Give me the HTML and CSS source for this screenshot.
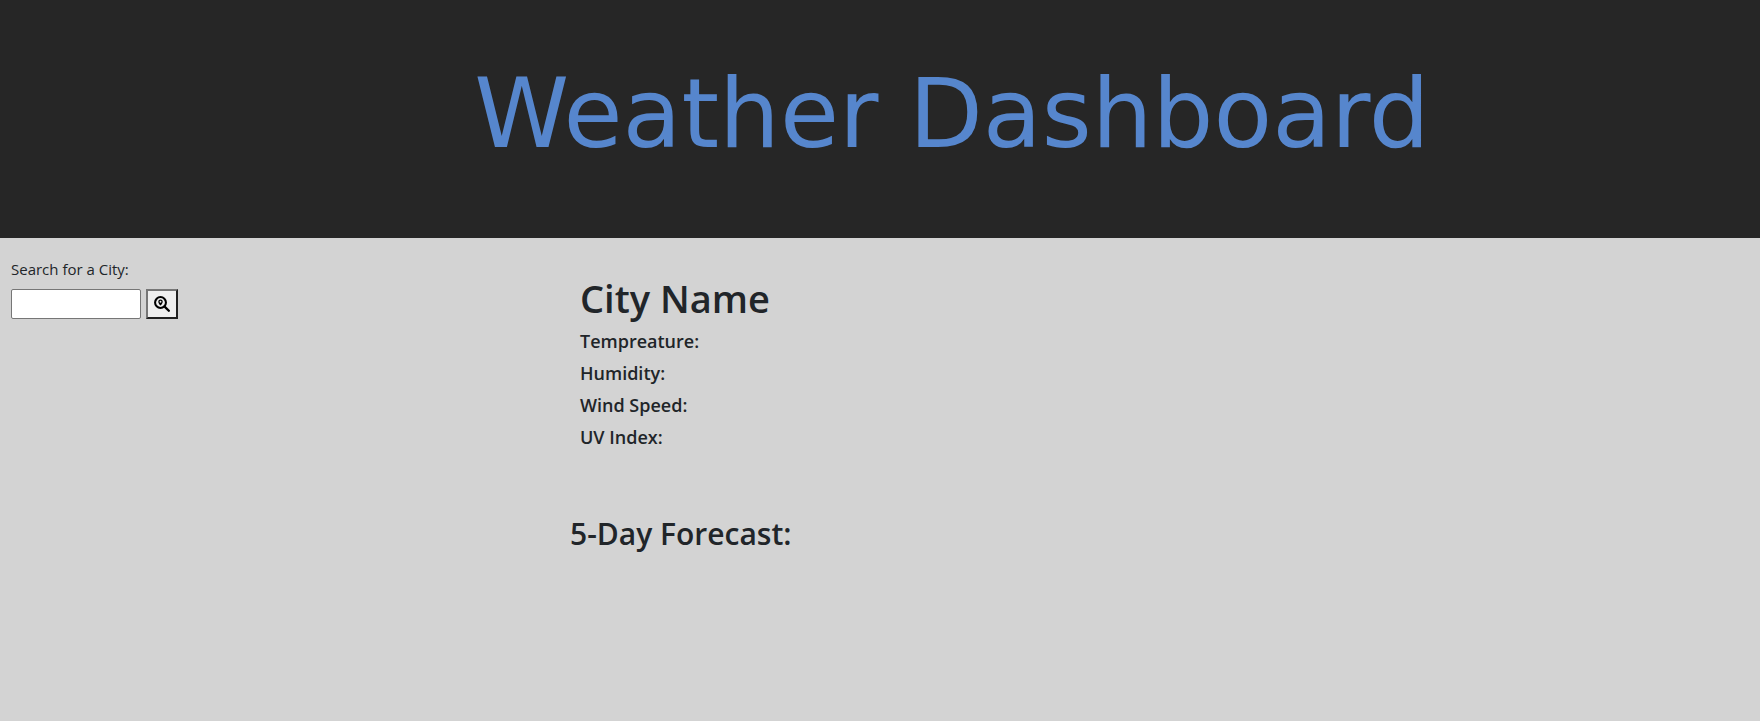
FILE: index.html
```html
<!DOCTYPE html>
<html lang="en">
<head>
  <meta charset="UTF-8">
  <meta name="viewport" content="width=device-width, initial-scale=1">
  <title>Weather Dashboard</title>
  <link rel="stylesheet" href="styles.css">
</head>
<body>
  <header class="banner">
    <h1 class="banner-title">Weather Dashboard</h1>
  </header>
  <main class="layout">
    <aside class="search">
      <label class="search-label" for="city">Search for a City:</label>
      <form class="search-row">
        <input class="search-input" id="city" type="text">
        <button class="search-button" type="button" aria-label="Search">
          <svg class="search-icon" viewBox="0 0 512 512" aria-hidden="true">
            <circle cx="208" cy="208" r="174" fill="none" stroke="#000" stroke-width="66"/>
            <path d="M340 340L474 474" stroke="#000" stroke-width="72" stroke-linecap="round"/>
            <path fill="#000" fill-rule="evenodd" d="M208 112a72 72 0 0 0-72 72c0 46 50 100 72 122 22-22 72-76 72-122a72 72 0 0 0-72-72zm0 42a30 30 0 1 1 0 60 30 30 0 0 1 0-60z"/>
          </svg>
        </button>
      </form>
    </aside>
    <div class="content">
      <section class="current">
        <h2 class="city-name">City Name</h2>
        <h5 class="reading">Tempreature:</h5>
        <h5 class="reading">Humidity:</h5>
        <h5 class="reading">Wind Speed:</h5>
        <h5 class="reading">UV Index:</h5>
      </section>
      <h3 class="forecast-title">5-Day Forecast:</h3>
    </div>
  </main>
</body>
</html>
```

FILE: styles.css
```css
* {
  box-sizing: border-box;
}

body {
  margin: 0;
  background: #d3d3d3;
  color: #212529;
  font-family: "Segoe UI", "Open Sans", "Noto Sans", sans-serif;
  font-size: 15px;
  line-height: 24px;
}

h1,
h2,
h3,
h5 {
  margin: 0;
  font-weight: 600;
}

.banner {
  padding: 57px 0 66px 144px;
  background: #262626;
  text-align: center;
}

.banner-title {
  color: #5686cd;
  font-family: Verdana, "DejaVu Sans", sans-serif;
  font-size: 96px;
  font-weight: 400;
  line-height: 115px;
}

.layout {
  display: grid;
  grid-template-columns: 570px 1fr;
}

.search {
  padding: 19px 11px;
}

.search-label {
  display: block;
  margin-bottom: 8px;
}

.search-row {
  display: flex;
  gap: 5px;
}

.search-input {
  width: 130px;
  height: 30px;
  padding: 1px 4px;
  border: 1px solid #767676;
  border-radius: 2px;
  background: #fff;
  font: inherit;
}

.search-button {
  display: flex;
  align-items: center;
  justify-content: center;
  width: 32px;
  height: 30px;
  padding: 0;
  border: 2px solid;
  border-color: #767676 #212121 #212121 #767676;
  background: #efefef;
}

.search-icon {
  width: 16px;
  height: 16px;
}

.current {
  padding: 37px 10px 0;
}

.city-name {
  margin-bottom: 8px;
  font-size: 38px;
  line-height: 46px;
}

.reading {
  margin-bottom: 8px;
  font-size: 18px;
  line-height: 24px;
}

.forecast-title {
  margin-top: 66px;
  font-size: 30px;
  line-height: 38px;
}
```
